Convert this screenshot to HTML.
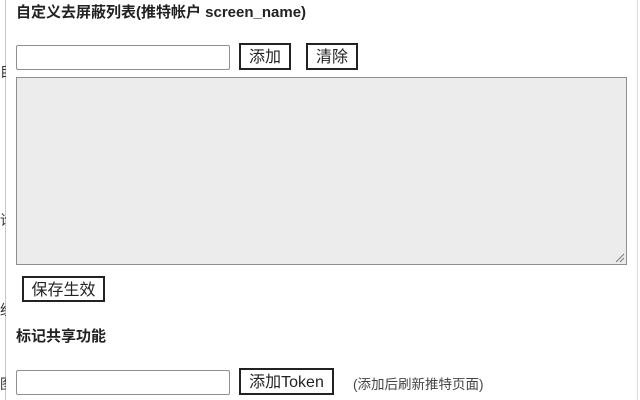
<!DOCTYPE html>
<html><head><meta charset="utf-8"><style>
body{margin:0;width:640px;height:400px;overflow:hidden;background:#fff;position:relative;font-family:"Liberation Sans","Noto Sans CJK SC",sans-serif;color:#222}
.a{position:absolute}
.vl{position:absolute;top:0;width:1px;height:400px;background:#c8c8c8}
h{position:absolute;font-weight:bold;font-size:15px;white-space:nowrap}
.in{position:absolute;box-sizing:border-box;border:1px solid #8f8f8f;border-radius:2px;background:#fff}
.bt{position:absolute;box-sizing:border-box;border:2px solid #222;background:#fff;font-size:16px;text-align:center;color:#222}
.f{position:absolute;left:0;font-size:14px;color:#333;width:6px;overflow:hidden;white-space:nowrap}
</style></head><body>
<div class="vl" style="left:5px"></div>
<div class="vl" style="left:637px;background:#ddd"></div>
<div class="f" style="top:62px">目</div>
<div class="f" style="top:210px">论</div>
<div class="f" style="top:300px">经</div>
<div class="f" style="top:374px">图</div>
<h style="left:16px;top:1px">自定义去屏蔽列表(推特帐户 screen_name)</h>
<div class="in" style="left:16px;top:45px;width:214px;height:25px"></div>
<div class="bt" style="left:239px;top:43px;width:52px;height:27px;line-height:26px">添加</div>
<div class="bt" style="left:306px;top:43px;width:52px;height:27px;line-height:26px">清除</div>
<div class="in" style="left:16px;top:77px;width:611px;height:188px;background:#ececec;border-radius:0"></div>
<svg class="a" style="left:615px;top:253px" width="10" height="10"><path d="M1 9L9 1M5 9L9 5" stroke="#777" stroke-width="1"/></svg>
<div class="bt" style="left:22px;top:276px;width:83px;height:26px;line-height:25px">保存生效</div>
<h style="left:16px;top:325px">标记共享功能</h>
<div class="in" style="left:16px;top:370px;width:214px;height:25px"></div>
<div class="bt" style="left:239px;top:368px;width:95px;height:27px;line-height:26px">添加Token</div>
<div class="a" style="left:353px;top:373px;font-size:13.5px;color:#444">(添加后刷新推特页面)</div>
</body></html>
